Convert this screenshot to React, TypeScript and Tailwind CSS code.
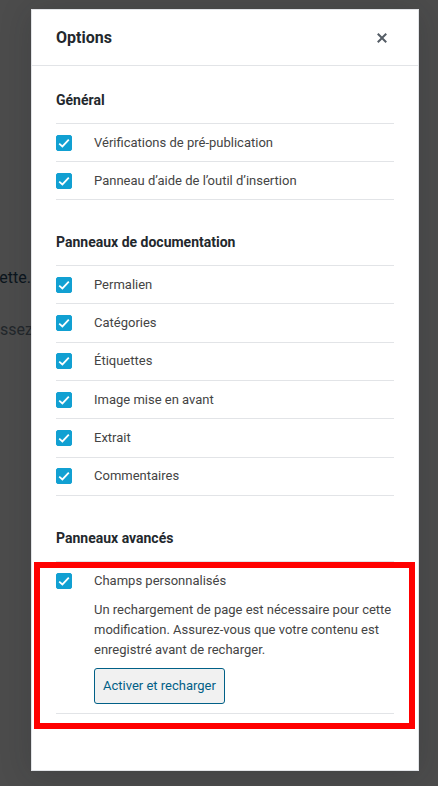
import { useState } from "react";
import type { ReactNode } from "react";

function Option({ id, label, children }: { id: string; label: string; children?: ReactNode }) {
  const [checked, setChecked] = useState(true);
  return (
    <li className="relative flex flex-col justify-center border-b border-[#e2e4e7]">
      <div className="flex items-center gap-[22px]">
        <span className="relative h-4 w-4 shrink-0">
          <input
            id={id}
            type="checkbox"
            checked={checked}
            onChange={() => setChecked(!checked)}
            className="block h-4 w-4 appearance-none rounded-xs border border-[#6c7781] bg-white checked:border-[#11a0d2] checked:bg-[#11a0d2]"
          />
          {checked && (
            <svg viewBox="0 0 16 16" className="pointer-events-none absolute inset-0 h-4 w-4" fill="none" stroke="#fff" strokeWidth="1.8" aria-hidden="true">
              <path d="M3.2 8.6 6.4 11.4 12.8 4.7" />
            </svg>
          )}
        </span>
        <label htmlFor={id} className="leading-[18px]">
          {label}
        </label>
      </div>
      {children}
    </li>
  );
}

function Section({ title, children }: { title: string; children: ReactNode }) {
  return (
    <section className="pb-8">
      <h2 className="mb-[13px] text-[14px] leading-5 font-bold text-[#23282d]">{title}</h2>
      {children}
    </section>
  );
}

export default function App() {
  return (
    <div className="relative min-h-screen overflow-hidden bg-[#4c4c4c] pt-[9px] pr-[19px] pb-[15px] pl-[31px] font-['Roboto',sans-serif] text-[13px] text-[#444]">
      <div className="absolute top-[268px] left-0 flex w-[31px] flex-col items-end gap-8 text-[16px] leading-5">
        <p className="text-[#0b151d]">ette.</p>
        <p className="self-start text-[#22272b]">ssez</p>
      </div>
      <div
        role="dialog"
        aria-labelledby="options-title"
        className="relative border border-[#e2e4e7] bg-white shadow-[0_3px_30px_rgba(25,30,35,0.2)]"
      >
        <header className="flex h-14 items-center justify-between border-b border-[#e2e4e7] px-6">
          <h1 id="options-title" className="text-[16px] leading-6 font-bold text-[#23282d]">
            Options
          </h1>
          <button type="button" aria-label="Fermer" className="flex h-6 w-6 items-center justify-center text-[#555d66]">
            <svg viewBox="0 0 20 20" className="h-5 w-5" fill="currentColor" aria-hidden="true">
              <path d="M14.95 6.46 11.41 10l3.54 3.54-1.41 1.41L10 11.42l-3.53 3.53-1.42-1.42L8.58 10 5.05 6.47l1.42-1.42L10 8.58l3.54-3.53z" />
            </svg>
          </button>
        </header>
        <div className="px-6 pt-6 pb-6">
          <Section title="Général">
            <ul className="grid min-h-[77px] auto-rows-fr border-t border-[#e2e4e7]">
              <Option id="prepublish" label="Vérifications de pré-publication" />
              <Option id="inserter-help" label="Panneau d’aide de l’outil d’insertion" />
            </ul>
          </Section>
          <Section title="Panneaux de documentation">
            <ul className="grid min-h-[231px] auto-rows-fr border-t border-[#e2e4e7]">
              <Option id="permalink" label="Permalien" />
              <Option id="categories" label="Catégories" />
              <Option id="tags" label="Étiquettes" />
              <Option id="featured-image" label="Image mise en avant" />
              <Option id="excerpt" label="Extrait" />
              <Option id="comments" label="Commentaires" />
            </ul>
          </Section>
          <Section title="Panneaux avancés">
            <ul className="border-t border-[#e2e4e7] *:pt-2.5 *:pb-[9px]">
              <Option id="custom-fields" label="Champs personnalisés">
                <div className="pt-2.5 pl-[38px]">
                  <p className="mb-2 leading-5">
                    Un rechargement de page est nécessaire pour cette modification. Assurez-vous que votre contenu est enregistré avant de recharger.
                  </p>
                  <button type="button" className="h-9 rounded-[3px] border border-[#016087] bg-[#f1f1f1] px-2 text-[#016087]">
                    Activer et recharger
                  </button>
                </div>
                <div className="pointer-events-none absolute top-0 -right-[21px] -bottom-4 -left-[22px] border-6 border-[#ff0000]" />
              </Option>
            </ul>
          </Section>
        </div>
      </div>
    </div>
  );
}
